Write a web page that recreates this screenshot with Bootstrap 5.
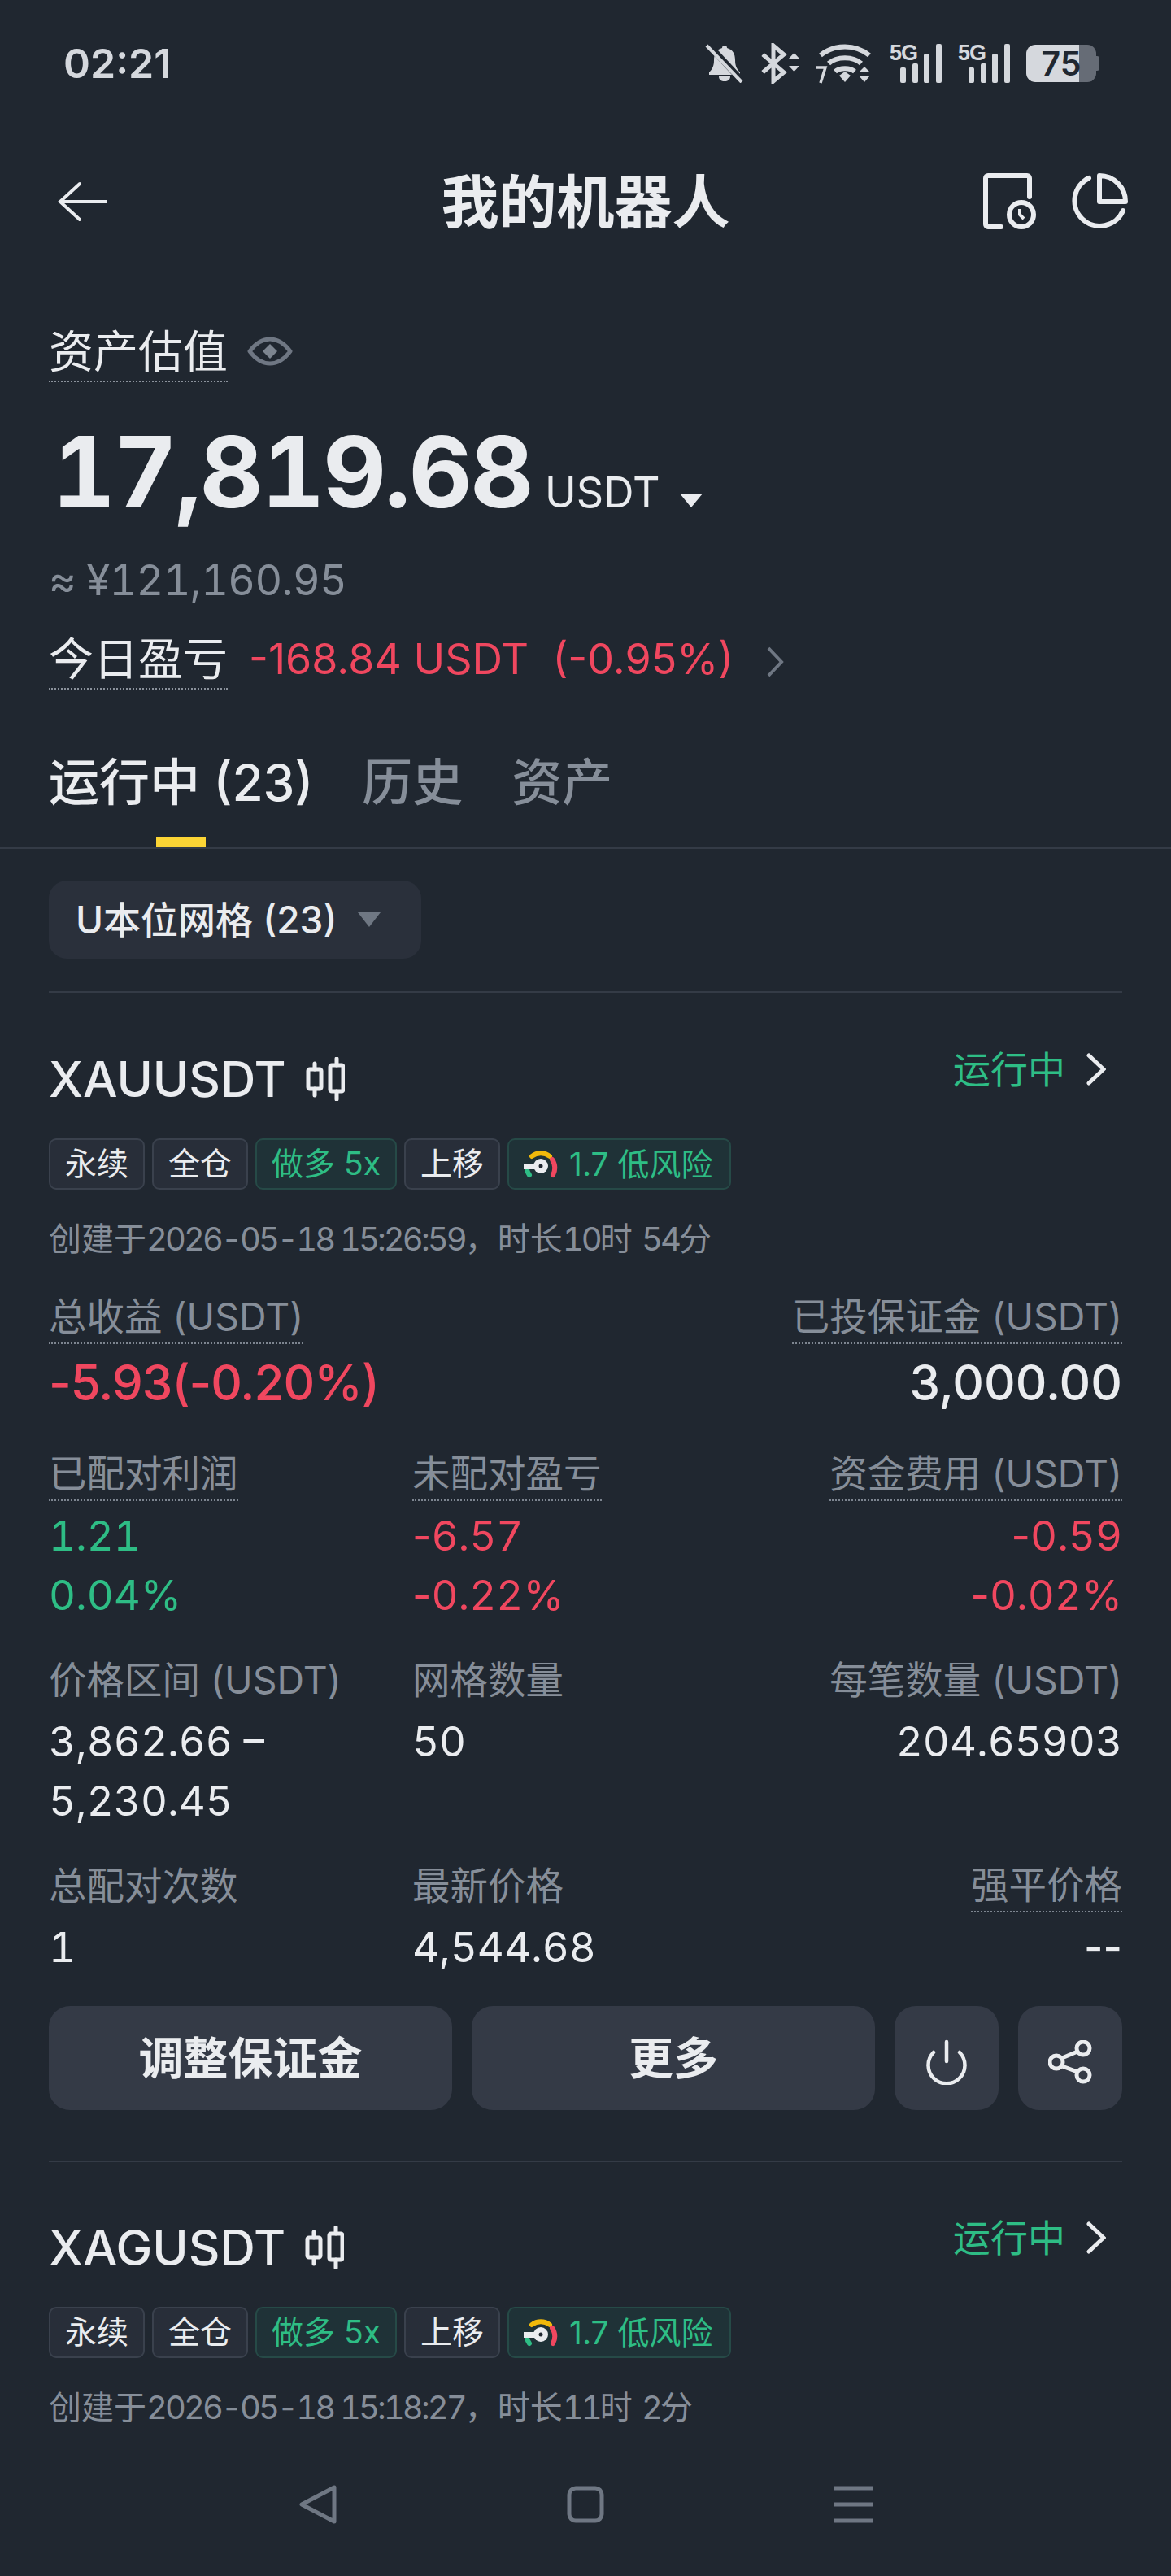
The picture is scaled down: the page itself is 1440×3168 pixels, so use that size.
<!DOCTYPE html>
<html lang="zh-CN">

<head>
  <meta charset="utf-8">
  <meta name="viewport" content="width=device-width">
  <title>我的机器人</title>
  <link href="https://cdn.jsdelivr.net/npm/bootstrap@5.3.2/dist/css/bootstrap.min.css" rel="stylesheet" type="text/css" />
  <style>
    :root { --pg: #202730; --txt: #eaecef; --mute: #868e99; --rd: #f0475f; --gn: #2ebd85; --line: #343b46; }
    html, body { margin: 0; background: var(--pg); }
    .shell { width: 1440px; height: 3168px; overflow: hidden; background: var(--pg); color: var(--txt); font-family: Inter, "Noto Sans CJK SC", sans-serif; }
    .statusbar { height: 156px; padding: 0 90px 0 78px; color: #d5d8dd; }
    .clock { font-size: 50px; font-weight: 600; }
    .sig-wrap { gap: 20px; }
    .sig { width: 64px; height: 48px; }
    .g5 { font-family: "Liberation Sans", sans-serif; font-size: 27px; font-weight: 700; line-height: 22px; width: 30px; letter-spacing: -1px; }
    .sig svg { margin-left: -17px; }
    .batt { width: 86px; height: 46px; margin-right: 2px; border-radius: 11px; background: linear-gradient(90deg, #d5d8dd 76%, #666c76 76%); color: #202730; font-size: 41px; font-weight: 600; line-height: 46px; text-align: center; position: relative; }
    .batt::after { content: ""; position: absolute; right: -4px; top: 14px; width: 4px; height: 18px; border-radius: 0 3px 3px 0; background: #666c76; }
    .topbar { height: 184px; padding: 0 53px 0 70px; }
    .pagename { font-size: 71px; font-weight: 700; line-height: 1; position: absolute; left: 0; right: 0; text-align: center; }
    .pad-x { padding-left: 60px; padding-right: 60px; }
    .lbl-big { font-size: 55px; padding-top: 6px; line-height: 72px; border-bottom: 2px dotted #8b929c; display: inline-block; }
    .sum-row { margin-top: 50px; gap: 24px; }
    .total { margin-top: 45px; height: 130px; padding-left: 4px; }
    .total-num { font-size: 121px; font-weight: 700; line-height: 130px; font-variant-numeric: tabular-nums; letter-spacing: -2.500px; }
    .total-unit { font-size: 52px; line-height: 130px; margin-left: 16px; }
    .total-caret { margin: 0 0 22px 24px; }
    .fiat { margin-top: 39px; font-size: 52px; line-height: 60px; color: var(--mute); font-variant-numeric: tabular-nums; letter-spacing: -0.600px; }
    .today { margin-top: 24px; }
    .today-val { font-size: 52px; line-height: 72px; color: var(--rd); margin: 6px 0 0 26px; white-space: nowrap; }
    .more-ico { margin: 12px 0 0 40px; }
    .tabbar { padding: 75px 60px 0; gap: 60px; border-bottom: 2px solid var(--line); }
    .tabbar .nav-link { padding: 0; color: var(--mute); font-size: 62px; line-height: 80px; text-align: center; font-weight: 500; }
    .tabbar .nav-link.active { color: var(--txt); }
    .tab-mark { display: block; width: 61px; height: 13px; margin: 26px auto 0; background: transparent; }
    .active .tab-mark { background: #fcd535; }
    .chip { margin-top: 39px; width: 458px; height: 96px; padding: 0 50px 0 33px; border-radius: 22px; background: #2a303b; font-size: 46px; font-weight: 500; white-space: nowrap; }
    .rule { height: 2px; background: var(--line); margin: 40px 60px 0; }
    .rule-thin { height: 1px; margin-top: 63px; }
    .bot { padding: 0 60px; }
    .bot-head { margin-top: 66px; height: 80px; }
    .bot-head.next { margin-top: 65px; }
    .sym { font-size: 60px; line-height: 80px; font-weight: 500; }
    .state { color: var(--gn); font-size: 46px; line-height: 56px; gap: 26px; padding-right: 20px; }
    .tags { margin-top: 33px; gap: 9px; }
    .tagx { height: 63px; padding: 0 18px; border: 2px solid #3a414d; border-radius: 9px; background: #282e39; font-size: 39px; line-height: 58px; white-space: nowrap; }
    .tagx.up { color: var(--gn); background: #1f3237; border-color: #264a47; }
    .tag-risk { gap: 14px; padding-right: 20px; }
    .stamp { margin-top: 31px; font-size: 40px; line-height: 60px; color: var(--mute); white-space: nowrap; }
    .stamp-n { font-variant-numeric: tabular-nums; letter-spacing: -0.073em; }
    .headline { margin-top: 33px; }
    .cap { font-size: 46.500px; color: var(--mute); line-height: 66px; height: 66px; margin-bottom: 6px; white-space: nowrap; }
    .cap-dot { width: fit-content; line-height: 64px; border-bottom: 2px dotted #7d8590; }
    .end .cap-dot { margin-left: auto; }
    .big-val { font-size: 60px; line-height: 80px; margin-top: 7px; font-weight: 500; }
    .big-val.dn-c { letter-spacing: -1px; }
    .stats { display: grid; grid-template-columns: 447px 1fr auto; margin-top: 40px; }
    .stats.tight { margin-top: 35px; }
    .val { font-size: 51px; line-height: 73px; white-space: nowrap; font-variant-numeric: tabular-nums; }
    .flat { font-variant-numeric: normal; }
    .end { text-align: right; }
    .up-c { color: var(--gn); }
    .dn-c { color: var(--rd); }
    .actions { margin-top: 36px; gap: 24px; }
    .act { height: 128px; border: 0; border-radius: 26px; background: #343a46; color: var(--txt); font-size: 55px; font-weight: 600; padding: 0; }
    .act.wide { width: 497px; }
    .act.sq { width: 128px; }
    .navkeys { height: 176px; margin-top: auto; flex-shrink: 0; }
    .navkey-row { gap: 282px; }
  </style>
</head>

<body>
  <div class="shell d-flex flex-column">

    <div class="statusbar d-flex align-items-center justify-content-between">
      <div class="clock">02:21</div>
      <div class="sig-wrap d-flex align-items-center">
        <svg width="48" height="48" viewBox="0 0 48 48"><path d="M24 2c2 0 3 1 3 3 7 2 10 7 10 15 0 7 2 11 6 15v3H5v-3c4-4 6-8 6-15 0-8 3-13 10-15 0-2 1-3 3-3zM17 40h14c0 4-3 6-7 6s-7-2-7-6z" fill="#d5d8dd"/><path d="M5 2 47 47" stroke="#202730" stroke-width="8"/><path d="M2 2 45 47" stroke="#d5d8dd" stroke-width="4"/></svg>
        <svg width="48" height="50" viewBox="0 0 48 50"><path d="M3 14 29 36 16 47V3l13 11L3 36" fill="none" stroke="#d5d8dd" stroke-width="5"/><path d="M35 19l6.500-7 6.500 7zM35 28h13l-6.500 7z" fill="#d5d8dd"/></svg>
        <svg width="71" height="50" viewBox="0 0 71 50"><path d="M6 15c17-14 43-14 60 0M16 25c10-9 30-9 40 0M24 35c6-5 18-5 24 0" fill="none" stroke="#d5d8dd" stroke-width="6"/><path d="M29 40l7-5 7 5-7 8z" fill="#d5d8dd"/><path d="M53 36l7-7 7 7zM53 40h14l-7 8z" fill="#d5d8dd"/><path d="M1 30h11L6 49" fill="none" stroke="#d5d8dd" stroke-width="3.500"/></svg>
        <div class="sig d-flex">
          <span class="g5">5G</span>
          <svg width="51" height="48" viewBox="0 0 51 48"><g fill="#d5d8dd"><rect x="0" y="29" width="7" height="19" rx="2"/><rect x="15" y="24" width="7" height="24" rx="2"/><rect x="29" y="12" width="7" height="36" rx="2"/><rect x="44" y="0" width="7" height="48" rx="2"/></g></svg>
        </div>
        <div class="sig d-flex">
          <span class="g5">5G</span>
          <svg width="51" height="48" viewBox="0 0 51 48"><g fill="#d5d8dd"><rect x="0" y="29" width="7" height="19" rx="2"/><rect x="15" y="24" width="7" height="24" rx="2"/><rect x="29" y="12" width="7" height="36" rx="2"/><rect x="44" y="0" width="7" height="48" rx="2"/></g></svg>
        </div>
        <div class="batt">75</div>
      </div>
    </div>

    <div class="topbar position-relative d-flex align-items-center justify-content-between">
      <div class="pagename">我的机器人</div>
      <svg width="62" height="50" viewBox="0 0 62 50"><path d="M28 3 4 25l24 22M5 25h57" fill="none" stroke="#eaecef" stroke-width="4" stroke-linecap="round"/></svg>
      <div class="d-flex position-relative" style="gap:40px">
        <svg width="66" height="72" viewBox="0 0 66 72"><g fill="none" stroke="#eaecef" stroke-width="6" stroke-linecap="round" stroke-linejoin="round"><path d="M22 67H6a3 3 0 0 1-3-3V7a3 3 0 0 1 3-3h48a3 3 0 0 1 3 3v23"/><circle cx="47" cy="52" r="15"/></g><path d="M45 45v7l5 5" fill="none" stroke="#eaecef" stroke-width="4"/></svg>
        <svg width="72" height="72" viewBox="0 0 72 72"><g fill="none" stroke="#eaecef" stroke-width="6" stroke-linecap="round" stroke-linejoin="round"><path d="M24 7A31 31 0 1 0 66 47"/><path d="M37 4v32h32A32 32 0 0 0 37 4z"/></g></svg>
      </div>
    </div>

    <div class="pad-x">
      <div class="sum-row d-flex align-items-center">
        <span class="lbl-big">资产估值</span>
        <svg class="mt-1" width="56" height="36" viewBox="0 0 56 36"><path d="M3 18C12 6 20 3 28 3s16 3 25 15c-9 12-17 15-25 15S12 30 3 18z" fill="none" stroke="#6f7783" stroke-width="5" stroke-linejoin="round"/><path d="M28 9l9 9-9 9-9-9z" fill="#7d8590"/></svg>
      </div>
      <div class="total d-flex align-items-baseline">
        <span class="total-num">17,819.68</span>
        <span class="total-unit">USDT</span>
        <svg class="total-caret" width="28" height="17" viewBox="0 0 28 17"><path d="M0 0h28L14 17z" fill="#eaecef"/></svg>
      </div>
      <div class="fiat">≈ ¥121,160.95</div>
      <div class="today d-flex align-items-center">
        <span class="lbl-big">今日盈亏</span>
        <span class="today-val">-168.84 USDT&nbsp;&nbsp;(-0.95%)</span>
        <svg class="more-ico" width="22" height="40" viewBox="0 0 22 40"><path d="M3 3l16 17L3 37" fill="none" stroke="#6f7783" stroke-width="4"/></svg>
      </div>
    </div>

    <ul class="nav tabbar">
      <li class="nav-item"><a class="nav-link active" href="#">运行中 (23)<span class="tab-mark"></span></a></li>
      <li class="nav-item"><a class="nav-link" href="#">历史<span class="tab-mark"></span></a></li>
      <li class="nav-item"><a class="nav-link" href="#">资产<span class="tab-mark"></span></a></li>
    </ul>

    <div class="pad-x">
      <div class="chip d-flex align-items-center justify-content-between">
        <span>U本位网格 (23)</span>
        <svg width="28" height="18" viewBox="0 0 28 18"><path d="M0 0h28L14 18z" fill="#6f7783"/></svg>
      </div>
    </div>
    <div class="rule"></div>

    <div class="bot">
      <div class="bot-head d-flex justify-content-between align-items-start">
        <div class="d-flex align-items-center gap-4">
          <span class="sym">XAUUSDT</span>
          <svg width="48" height="54" viewBox="0 0 48 54"><g fill="none" stroke="#eaecef" stroke-width="5" stroke-linecap="round"><rect x="3" y="15" width="16" height="24" rx="2"/><rect x="30" y="10" width="16" height="32" rx="2"/><path d="M11 8v7M11 39v8M38 2v8M38 42v10"/></g></svg>
        </div>
        <div class="state d-flex align-items-center">
          <span>运行中</span>
          <svg width="24" height="40" viewBox="0 0 24 40"><path d="M3 3l18 17L3 37" fill="none" stroke="#eaecef" stroke-width="5" stroke-linecap="round"/></svg>
        </div>
      </div>
      <div class="tags d-flex">
        <span class="tagx">永续</span>
        <span class="tagx">全仓</span>
        <span class="tagx up">做多 5x</span>
        <span class="tagx">上移</span>
        <span class="tagx up tag-risk d-flex align-items-center">
          <svg width="42" height="36" viewBox="0 0 42 36"><g fill="none" stroke-width="6" stroke-linecap="round"><path d="M7 31c-2-3-3-5-3-7" stroke="#2ebd85"/><path d="M10 8a18 18 0 0 1 22 0" stroke="#f0b90b"/><path d="M35 12a19 19 0 0 1 1 19" stroke="#f0475f"/></g><path d="M0 17h20v7H0z" fill="#eaecef"/><circle cx="21" cy="20" r="9" fill="#eaecef"/><circle cx="21" cy="20" r="2.500" fill="#202730"/></svg>
          1.7 低风险
        </span>
      </div>
      <div class="stamp">创建于<span class="stamp-n">2026-05-18 15:26:59</span>，时长<span class="stamp-n">10</span>时 <span class="stamp-n">54</span>分</div>

      <div class="headline d-flex justify-content-between">
        <div>
          <div class="cap cap-dot">总收益 (USDT)</div>
          <div class="big-val dn-c">-5.93(-0.20%)</div>
        </div>
        <div class="end">
          <div class="cap cap-dot">已投保证金 (USDT)</div>
          <div class="big-val">3,000.00</div>
        </div>
      </div>

      <div class="stats">
        <div><div class="cap cap-dot">已配对利润</div><div class="val up-c">1.21</div><div class="val up-c">0.04%</div></div>
        <div><div class="cap cap-dot">未配对盈亏</div><div class="val dn-c"><span class="flat">-</span>6.57</div><div class="val dn-c"><span class="flat">-</span>0.22%</div></div>
        <div class="end"><div class="cap cap-dot">资金费用 (USDT)</div><div class="val dn-c"><span class="flat">-</span>0.59</div><div class="val dn-c"><span class="flat">-</span>0.02%</div></div>
      </div>

      <div class="stats tight">
        <div><div class="cap">价格区间 (USDT)</div><div class="val">3,862.66 –<br>5,230.45</div></div>
        <div><div class="cap">网格数量</div><div class="val">50</div></div>
        <div class="end"><div class="cap">每笔数量 (USDT)</div><div class="val">204.65903</div></div>
      </div>

      <div class="stats tight">
        <div><div class="cap">总配对次数</div><div class="val">1</div></div>
        <div><div class="cap">最新价格</div><div class="val">4,544.68</div></div>
        <div class="end"><div class="cap cap-dot">强平价格</div><div class="val flat">--</div></div>
      </div>

      <div class="actions d-flex">
        <button class="btn act wide">调整保证金</button>
        <button class="btn act wide">更多</button>
        <button class="btn act sq">
          <svg width="50" height="56" viewBox="0 0 50 56"><path d="M25 3v24M9 16a22.500 22.500 0 1 0 32 0" fill="none" stroke="#eaecef" stroke-width="4.500" stroke-linecap="round"/></svg>
        </button>
        <button class="btn act sq">
          <svg width="54" height="54" viewBox="0 0 54 54"><g fill="none" stroke="#eaecef" stroke-width="5"><circle cx="10" cy="27" r="8"/><circle cx="43" cy="10" r="8"/><circle cx="43" cy="43" r="8"/><path d="M17 22 36 14M17 32l19 7"/></g></svg>
        </button>
      </div>
    </div>

    <div class="rule rule-thin"></div>

    <div class="bot">
      <div class="bot-head next d-flex justify-content-between align-items-start">
        <div class="d-flex align-items-center gap-4">
          <span class="sym">XAGUSDT</span>
          <svg width="48" height="54" viewBox="0 0 48 54"><g fill="none" stroke="#eaecef" stroke-width="5" stroke-linecap="round"><rect x="3" y="15" width="16" height="24" rx="2"/><rect x="30" y="10" width="16" height="32" rx="2"/><path d="M11 8v7M11 39v8M38 2v8M38 42v10"/></g></svg>
        </div>
        <div class="state d-flex align-items-center">
          <span>运行中</span>
          <svg width="24" height="40" viewBox="0 0 24 40"><path d="M3 3l18 17L3 37" fill="none" stroke="#eaecef" stroke-width="5" stroke-linecap="round"/></svg>
        </div>
      </div>
      <div class="tags d-flex">
        <span class="tagx">永续</span>
        <span class="tagx">全仓</span>
        <span class="tagx up">做多 5x</span>
        <span class="tagx">上移</span>
        <span class="tagx up tag-risk d-flex align-items-center">
          <svg width="42" height="36" viewBox="0 0 42 36"><g fill="none" stroke-width="6" stroke-linecap="round"><path d="M7 31c-2-3-3-5-3-7" stroke="#2ebd85"/><path d="M10 8a18 18 0 0 1 22 0" stroke="#f0b90b"/><path d="M35 12a19 19 0 0 1 1 19" stroke="#f0475f"/></g><path d="M0 17h20v7H0z" fill="#eaecef"/><circle cx="21" cy="20" r="9" fill="#eaecef"/><circle cx="21" cy="20" r="2.500" fill="#202730"/></svg>
          1.7 低风险
        </span>
      </div>
      <div class="stamp">创建于<span class="stamp-n">2026-05-18 15:18:27</span>，时长<span class="stamp-n">11</span>时 <span class="stamp-n">2</span>分</div>
    </div>

    <div class="navkeys d-flex align-items-center justify-content-center">
      <div class="navkey-row d-flex align-items-center">
        <svg width="48" height="48" viewBox="0 0 48 48"><path d="M44 3v42L4 24z" fill="none" stroke="#6f7783" stroke-width="5" stroke-linejoin="round"/></svg>
        <svg width="46" height="46" viewBox="0 0 46 46"><rect x="3" y="3" width="40" height="40" rx="8" fill="none" stroke="#6f7783" stroke-width="5"/></svg>
        <svg width="48" height="46" viewBox="0 0 48 46"><path d="M0 3h48M0 23h48M0 43h48" stroke="#6f7783" stroke-width="5"/></svg>
      </div>
    </div>
  </div>
  <script src="https://cdn.jsdelivr.net/npm/bootstrap@5.3.2/dist/js/bootstrap.bundle.min.js"></script>
</body>

</html>
